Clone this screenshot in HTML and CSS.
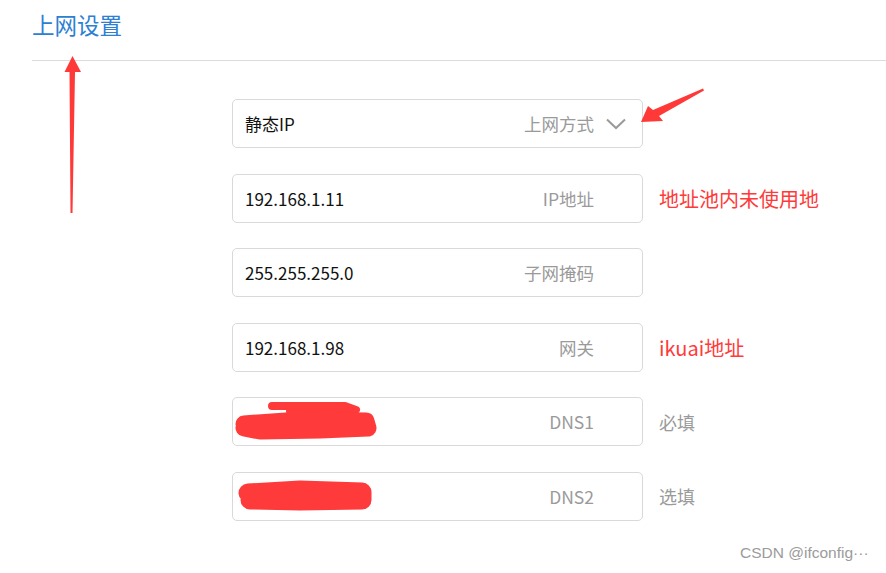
FILE: index.html
```html
<!DOCTYPE html>
<html lang="zh-CN">
<head>
<meta charset="utf-8">
<title>上网设置</title>
<link rel="stylesheet" href="styles.css">
</head>
<body>
<div class="page">
  <header class="header">
    <h1 class="title">上网设置</h1>
  </header>
  <form class="form">
    <div class="row">
      <div class="field">
        <span class="value">静态IP</span>
        <span class="label">上网方式</span>
        <svg class="chevron" width="20" height="12" viewBox="0 0 20 12"><path d="M1 1.5 L10 10 L19 1.5" fill="none" stroke="#9a9a9a" stroke-width="2"/></svg>
      </div>
    </div>
    <div class="row">
      <div class="field field-plain">
        <span class="value">192.168.1.11</span>
        <span class="label">IP地址</span>
      </div>
      <span class="note note-red">地址池内未使用地</span>
    </div>
    <div class="row">
      <div class="field field-plain">
        <span class="value">255.255.255.0</span>
        <span class="label">子网掩码</span>
      </div>
    </div>
    <div class="row">
      <div class="field field-plain">
        <span class="value">192.168.1.98</span>
        <span class="label">网关</span>
      </div>
      <span class="note note-red">ikuai地址</span>
    </div>
    <div class="row">
      <div class="field field-plain">
        <span class="value"></span>
        <span class="label">DNS1</span>
      </div>
      <span class="note">必填</span>
    </div>
    <div class="row">
      <div class="field field-plain">
        <span class="value"></span>
        <span class="label">DNS2</span>
      </div>
      <span class="note">选填</span>
    </div>
  </form>

  <svg class="annot" width="886" height="573" viewBox="0 0 886 573">
    <!-- up arrow -->
    <polygon points="70.5,213 72.5,213 75,72 81,72 72.5,56 64.5,72 69.5,72" fill="#ff3838"/>
    <!-- diagonal arrow -->
    <polygon points="703,88.5 704,90.5 659,116 663,121 641,122 648,106 653,110" fill="#ff3838"/>
    <!-- scribbles -->
    <g fill="none" stroke="#ff3a3a" stroke-linecap="round" stroke-linejoin="round">
      <path d="M272 406 L345 406 L356 410 L320 413 L290 411" stroke-width="8"/>
      <path d="M244 424 L300 420 L366 421 L368 428 L320 430 L260 431 L244 428" stroke-width="17"/>
      <path d="M248 493 L300 490 L362 492 L362 500 L300 501 L250 500" stroke-width="19"/>
    </g>
  </svg>
  <div class="watermark">CSDN @ifconfig···</div>
</div>
</body>
</html>
```
FILE: styles.css
```css
html, body {
  margin: 0;
  padding: 0;
  background: #ffffff;
}
.page {
  position: relative;
  width: 886px;
  height: 573px;
  overflow: hidden;
  font-family: "Noto Sans CJK SC", "Noto Sans", sans-serif;
}
.header {
  margin-left: 32px;
  padding-top: 11px;
  height: 49px;
  border-bottom: 1px solid #dcdcdc;
  box-sizing: content-box;
}
.title {
  margin: 0;
  font-size: 22.5px;
  line-height: 26px;
  font-weight: normal;
  color: #2d7fd3;
}
.form {
  margin: 38px 0 0 232px;
  display: flex;
  flex-direction: column;
  gap: 25.6px;
}
.row {
  display: flex;
  align-items: center;
  gap: 16px;
}
.field {
  box-sizing: border-box;
  width: 411px;
  height: 49px;
  border: 1px solid #d9d9d9;
  border-radius: 5px;
  display: flex;
  align-items: center;
  padding: 0 16px 0 12px;
}
.field-plain {
  padding-right: 48px;
}
.value {
  flex: 1;
  font-size: 17px;
  color: #111;
}
.label {
  font-size: 17.5px;
  color: #9a9a9a;
}
.chevron {
  margin-left: 12px;
  display: block;
}
.note {
  font-size: 18px;
  color: #9a9a9a;
}
.note-red {
  color: #ff3a3a;
  font-size: 20px;
}
.annot {
  position: absolute;
  left: 0;
  top: 0;
  pointer-events: none;
}
.watermark {
  position: absolute;
  left: 740px;
  top: 543px;
  font-family: "Liberation Sans", "Noto Sans CJK SC", sans-serif;
  font-size: 15.5px;
  line-height: 20px;
  color: #9b9b9b;
  white-space: nowrap;
}
```
